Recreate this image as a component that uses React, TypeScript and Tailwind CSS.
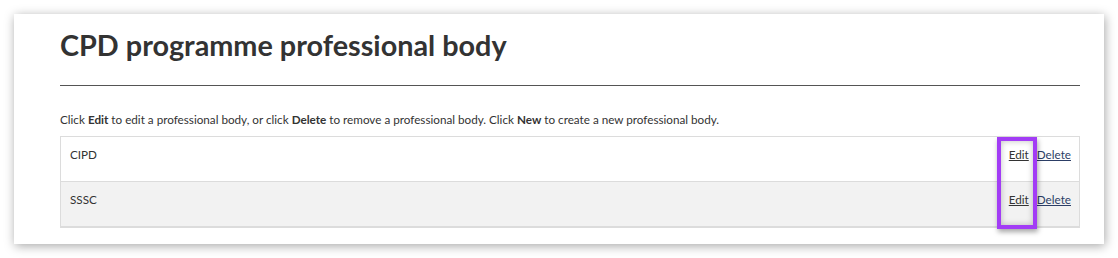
import React from 'react';

// --- Row Component ---
const BodyRow = ({ name, shaded }: { name: string; shaded?: boolean }) => (
  <div
    className={`flex justify-between h-[45px] pl-[9px] pr-[8px] pt-[8px] border-b border-[#dcdcdc] last:border-b-0 ${
      shaded ? 'bg-[#f2f2f2]' : 'bg-white'
    }`}
  >
    <span className="text-[11.7px] leading-[18px] text-[#333]">{name}</span>
    <span className="text-[11.7px] leading-[18px] flex gap-[8px]">
      <a href="#" className="underline text-[#333]">Edit</a>
      <a href="#" className="underline text-[#2c3e66]">Delete</a>
    </span>
  </div>
);

export default function App() {
  return (
    <main className="bg-white w-[1118px] h-[258px] pt-[14px] pl-[14px] font-['Lato','Liberation_Sans',sans-serif]">
      <section className="relative w-[1090px] h-[230px] bg-white shadow-[1px_2px_10px_rgba(0,0,0,0.35)] pl-[46px] pr-[24px] pt-[14px]">
        <h1 className="text-[28.8px] leading-[35px] font-bold text-[#333]">CPD programme professional body</h1>
        <hr className="mt-[22px] border-t border-[#555]" />

        <p className="mt-[24px] text-[11.7px] leading-[18px] text-[#333]">
          Click <b className="font-bold">Edit</b> to edit a professional body, or click{' '}
          <b className="font-bold">Delete</b> to remove a professional body. Click{' '}
          <b className="font-bold">New</b> to create a new professional body.
        </p>

        <div className="relative mt-[8px] border border-[#dcdcdc]">
          <BodyRow name="CIPD" />
          <BodyRow name="SSSC" shaded />

          {/* Highlight around the Edit column */}
          <div className="absolute top-0 right-[42px] w-[40px] h-[92px] border-[4px] border-[#a23cf5] shadow-[inset_0_0_6px_rgba(0,0,0,0.25),1px_3px_5px_rgba(0,0,0,0.35)]" />
        </div>
      </section>
    </main>
  );
}
